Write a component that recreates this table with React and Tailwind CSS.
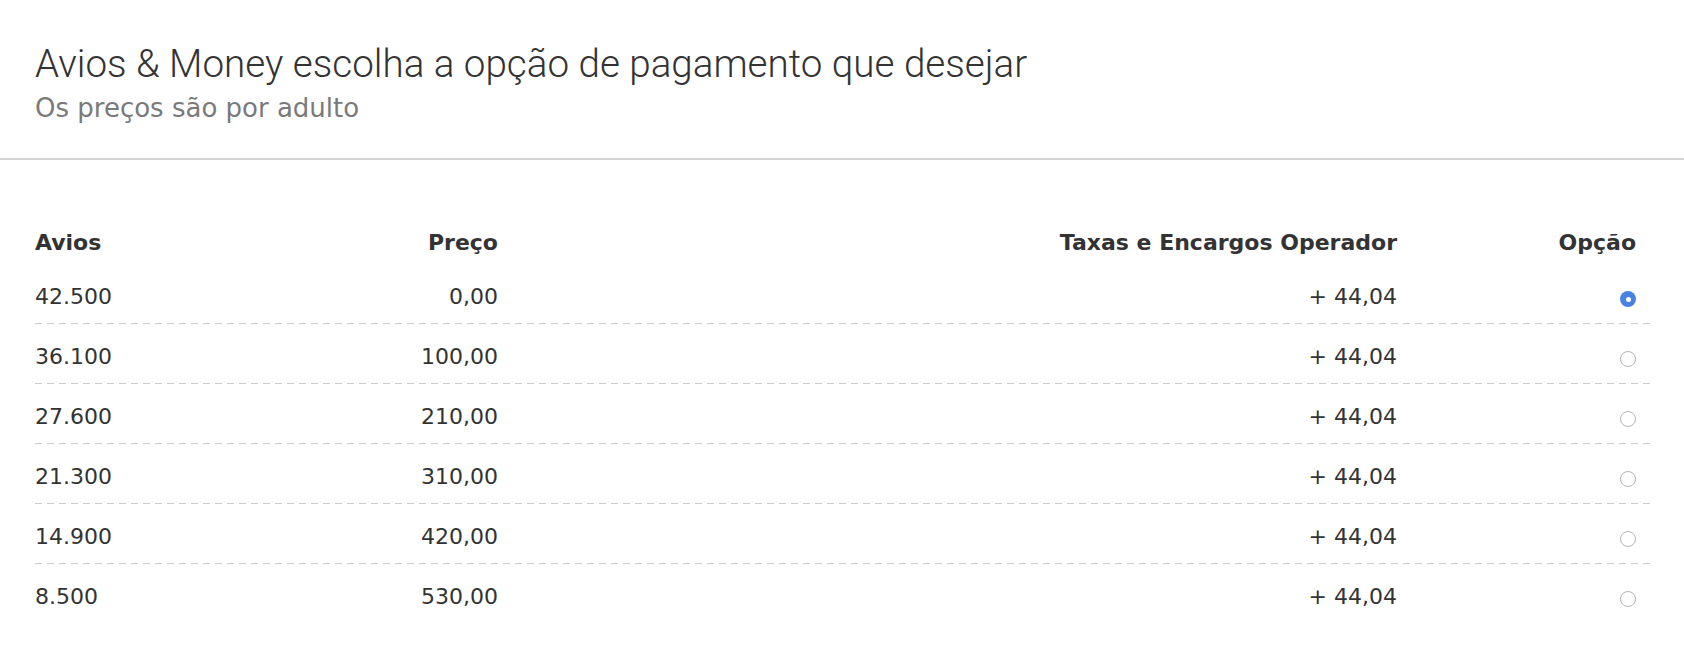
import React from "react";

const rows = [
  { avios: "42.500", price: "0,00", fee: "+ 44,04" },
  { avios: "36.100", price: "100,00", fee: "+ 44,04" },
  { avios: "27.600", price: "210,00", fee: "+ 44,04" },
  { avios: "21.300", price: "310,00", fee: "+ 44,04" },
  { avios: "14.900", price: "420,00", fee: "+ 44,04" },
  { avios: "8.500", price: "530,00", fee: "+ 44,04" },
];

const cols = "grid grid-cols-[232px_231px_899px_256px]";

function Radio({ checked }) {
  if (checked) {
    return (
      <span className="mt-[7px] flex h-[16px] w-[16px] items-center justify-center rounded-full bg-[#4a81e2]">
        <span className="h-[5px] w-[5px] rounded-full bg-white" />
      </span>
    );
  }
  return (
    <span className="mt-[7px] block h-[16px] w-[16px] rounded-full border border-[#b4b4b4] bg-white" />
  );
}

export default function App() {
  return (
    <div className="min-h-[666px] bg-white text-[#333] font-['DejaVu_Sans',Verdana,sans-serif]">
      {/* heading */}
      <div className="border-b-2 border-[#d4d4d4] px-[35px] pt-[42px] pb-[35px]">
        <h1 className="font-['Roboto',sans-serif] text-[38.6px] font-light leading-[44px] text-[#333]">
          Avios &amp; Money escolha a opção de pagamento que desejar
        </h1>
        <p className="mt-[7px] text-[26px] leading-[30px] text-[#7a7a7a]">
          Os preços são por adulto
        </p>
      </div>

      {/* table */}
      <div className="pl-[35px] pr-[31px] pt-[70px]">
        <div className={`${cols} pb-[9px] text-[22px] font-bold leading-[25px]`}>
          <div>Avios</div>
          <div className="text-right">Preço</div>
          <div className="text-right">Taxas e Encargos Operador</div>
          <div className="pr-[17px] text-right">Opção</div>
        </div>

        {rows.map((r, i) => (
          <div key={i}>
            <div className={`${cols} pt-5 pb-[14px] text-[22px] leading-[25px]`}>
              <div>{r.avios}</div>
              <div className="text-right">{r.price}</div>
              <div className="text-right">{r.fee}</div>
              <div className="flex items-start justify-end pr-[17px]">
                <Radio checked={i === 0} />
              </div>
            </div>
            {i < rows.length - 1 && (
              <div className="h-px bg-[repeating-linear-gradient(to_right,#cbcbcb_0_7px,transparent_7px_12px)]" />
            )}
          </div>
        ))}
      </div>
    </div>
  );
}
